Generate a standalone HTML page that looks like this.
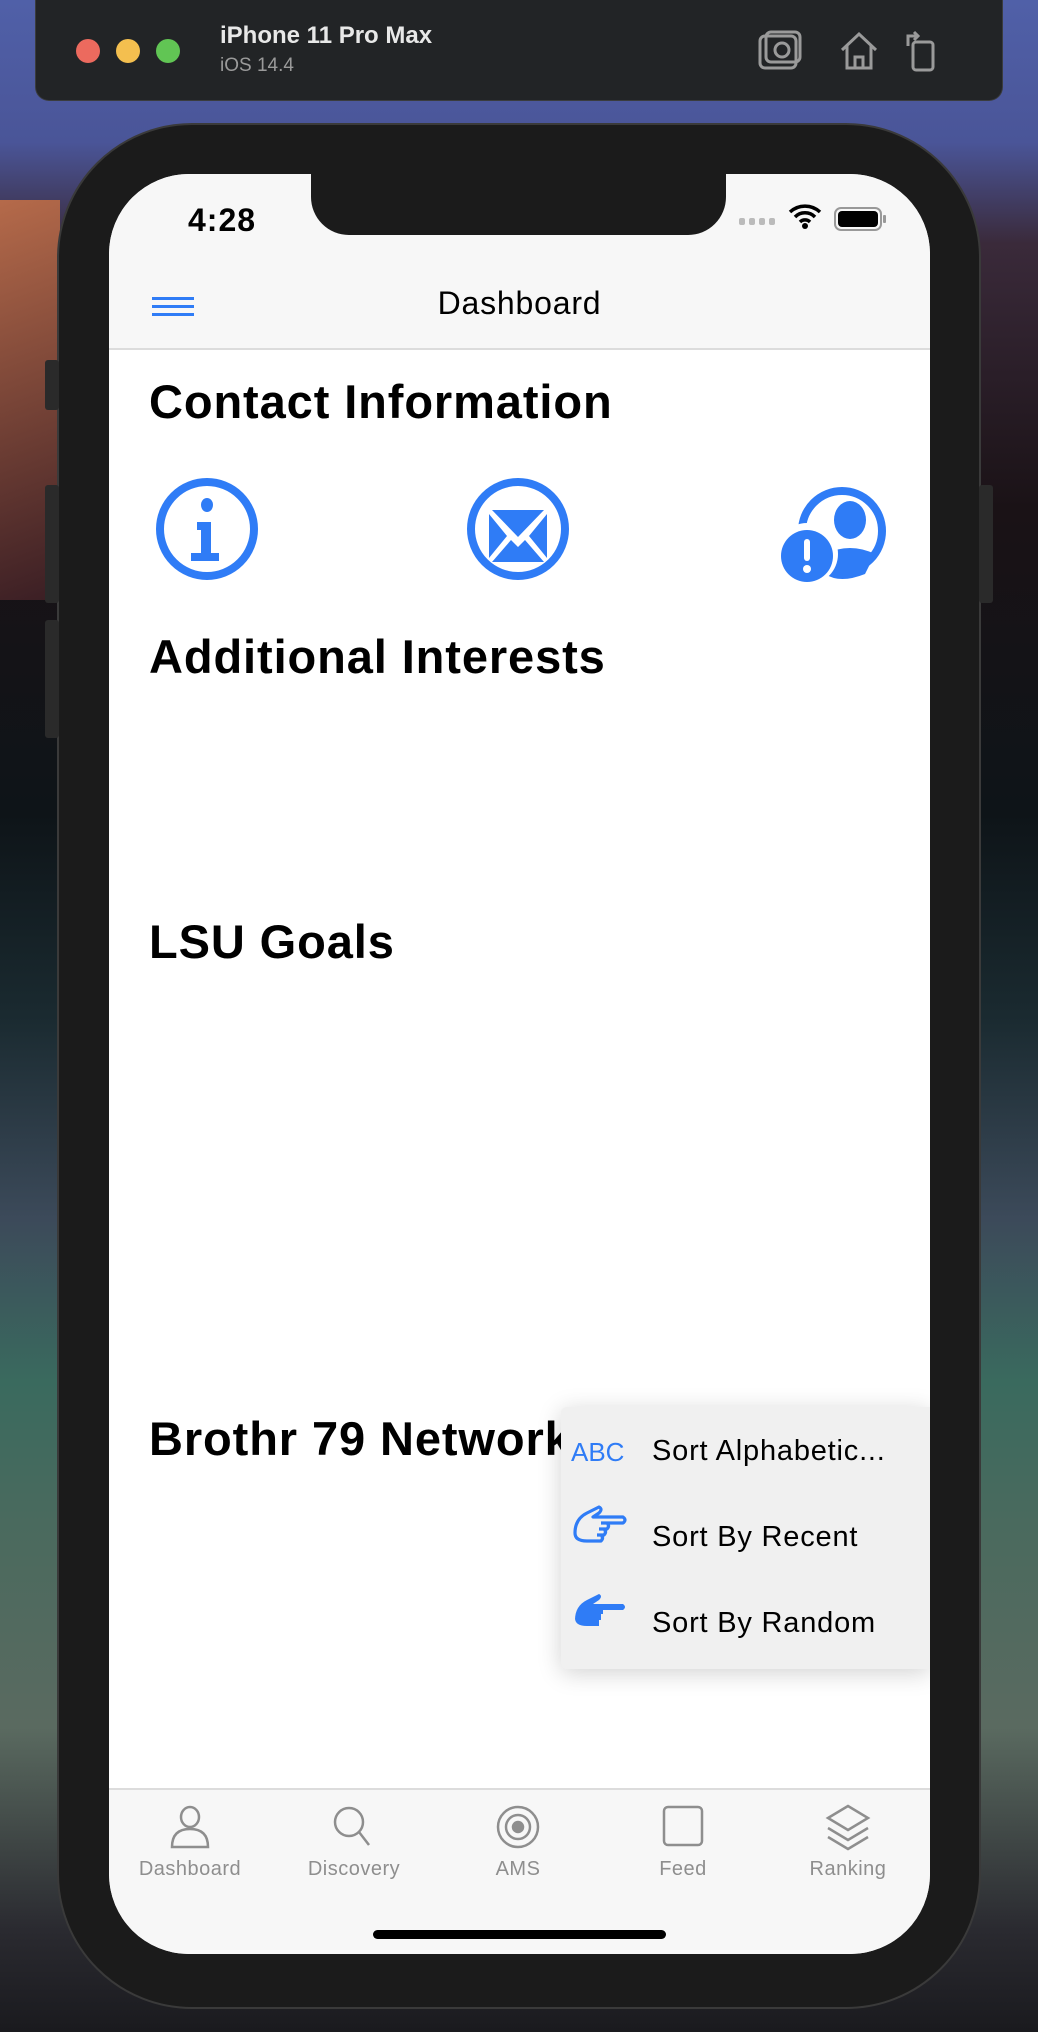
<!DOCTYPE html>
<html><head><meta charset="utf-8"><style>
*{margin:0;padding:0;box-sizing:border-box}
body{width:1038px;height:2032px;overflow:hidden;position:relative;font-family:"Liberation Sans",sans-serif;
background:linear-gradient(180deg,#5060a8 0%,#4a5598 7%,#3a2a3a 12%,#1a1216 25%,#0e1418 40%,#1a2a30 50%,#3c4a5a 60%,#3a6a5e 68%,#4a6a5e 75%,#5a6a60 85%,#2a2a30 95%,#1a1a1e 100%)}
.bgL{position:absolute;left:0;top:200px;width:60px;height:400px;background:linear-gradient(160deg,#b56a4a,#3a1e24);}
.bar{position:absolute;left:35px;top:0;width:968px;height:101px;background:#222426;border-radius:0 0 14px 14px;border:1px solid #3a3c3e;border-top:none}
.dot{position:absolute;top:39px;width:24px;height:24px;border-radius:50%}
.phone{position:absolute;left:57px;top:123px;width:924px;height:1886px;background:#1b1b1b;border-radius:135px;border:2px solid #3a3a3a}
.btn{position:absolute;background:#2a2a2a;border-radius:3px}
.screen{position:absolute;left:109px;top:174px;width:821px;height:1780px;background:#fff;border-radius:80px;overflow:hidden}
.notch{position:absolute;left:202px;top:0;width:415px;height:61px;background:#1b1b1b;border-radius:0 0 38px 38px}
.nav{position:absolute;left:0;top:0;width:821px;height:176px;background:#f7f7f7;border-bottom:2px solid #dcdcdc}
h2{position:absolute;left:40px;font-size:47px;font-weight:bold;color:#000;white-space:nowrap;letter-spacing:0.9px}
.tab{position:absolute;left:0;top:1614px;width:821px;height:166px;background:#f7f7f7;border-top:2px solid #dcdcdc}
.tl{position:absolute;top:68px;width:160px;margin-left:-80px;text-align:center;font-size:20px;color:#8e8e8e;letter-spacing:0.5px}
.menu{position:absolute;left:452px;top:1233px;width:369px;height:262px;background:#f0f0f0;border-radius:6px 0 0 6px;box-shadow:0 4px 24px rgba(0,0,0,0.18)}
.mi{position:absolute;left:91px;font-size:29px;color:#000;white-space:nowrap;letter-spacing:0.8px}
</style></head><body>
<div class="bgL"></div>
<div class="bar">
<div class="dot" style="left:40px;background:#ec6a5e"></div>
<div class="dot" style="left:80px;background:#f4bf4f"></div>
<div class="dot" style="left:120px;background:#61c554"></div>
<div style="position:absolute;left:184px;top:22px;font-size:24px;font-weight:bold;color:#e8e8e8">iPhone 11 Pro Max</div>
<div style="position:absolute;left:184px;top:55px;font-size:19px;color:#9a9a9a">iOS 14.4</div>
<svg style="position:absolute;left:722px;top:28px" width="180" height="45" viewBox="0 0 180 45" fill="none" stroke="#9a9a9a" stroke-width="3">
<rect x="2" y="8" width="36" height="32" rx="5"/><rect x="8" y="4" width="34" height="30" rx="5"/><circle cx="24" cy="22" r="7"/>
<path d="M84 22 L101 6 L118 22 M89 18 V40 H113 V18 M97 40 V29 H105 V40"/>
<rect x="155" y="14" width="20" height="28" rx="3"/><path d="M150 18 V8 h10 M156 4 l4 4 -4 4"/>
</svg>
</div>
<div class="phone"></div>
<div class="btn" style="left:45px;top:360px;width:14px;height:50px"></div>
<div class="btn" style="left:45px;top:485px;width:14px;height:118px"></div>
<div class="btn" style="left:45px;top:620px;width:14px;height:118px"></div>
<div class="btn" style="left:979px;top:485px;width:14px;height:118px"></div>
<div class="screen">
<div class="nav">
<div style="position:absolute;left:79px;top:28px;font-size:32px;font-weight:bold;color:#000;letter-spacing:1px">4:28</div>
<svg style="position:absolute;left:630px;top:30px" width="160" height="30" viewBox="0 0 160 30">
<g fill="#bbb"><rect x="0" y="14" width="6" height="7" rx="2"/><rect x="10" y="14" width="6" height="7" rx="2"/><rect x="20" y="14" width="6" height="7" rx="2"/><rect x="30" y="14" width="6" height="7" rx="2"/></g>
<path d="M51 8 a22 22 0 0 1 30 0 M56 13 a14 14 0 0 1 20 0 M61 18 a7 7 0 0 1 10 0" stroke="#000" stroke-width="3.5" fill="none"/><circle cx="66" cy="22" r="3" fill="#000"/>
<rect x="96" y="4" width="46" height="22" rx="6" fill="none" stroke="#999" stroke-width="2"/><rect x="99" y="7" width="40" height="16" rx="4" fill="#000"/><rect x="144" y="11" width="3" height="8" rx="1" fill="#999"/>
</svg>
<div class="notch"></div>
<div style="position:absolute;left:43px;top:123px;width:42px;height:3px;background:#2f7cf6;box-shadow:0 8px 0 #2f7cf6,0 16px 0 #2f7cf6"></div>
<div style="position:absolute;left:0;width:821px;top:111px;text-align:center;font-size:32px;color:#000;letter-spacing:0.8px">Dashboard</div>
</div>
<h2 style="top:200px">Contact Information</h2>
<svg style="position:absolute;left:0;top:300px" width="821" height="120" viewBox="0 0 821 120">
<g fill="none" stroke="#2f7cf6" stroke-width="8"><circle cx="98" cy="55" r="47"/><circle cx="409" cy="55" r="47"/></g>
<g fill="#2f7cf6"><ellipse cx="98" cy="31" rx="6" ry="7"/><path d="M88 48 h14 v31 h8 v8 h-28 v-8 h10 v-23 h-4z"/>
<path d="M383 36 h52 l-26 27z M380 40 l18 22 -18 22z M438 40 l-18 22 18 22z M383 88 l19 -22 7 7 7 -7 19 22z"/>
<circle cx="733" cy="57" r="40" fill="none" stroke="#2f7cf6" stroke-width="8"/>
<ellipse cx="741" cy="46" rx="16" ry="19"/><path d="M716 80 q25 -12 50 0 l-10 20 q-25 10 -40 0z"/>
<circle cx="698" cy="80" r="31" fill="#fff"/><circle cx="698" cy="82" r="26"/></g>
<rect x="695" y="65" width="6" height="22" rx="3" fill="#fff"/><circle cx="698" cy="95" r="4" fill="#fff"/>
</svg>
<h2 style="top:455px">Additional Interests</h2>
<h2 style="top:740px">LSU Goals</h2>
<h2 style="top:1237px">Brothr 79 Network</h2>
<div class="menu">
<div style="position:absolute;left:10px;top:30px;font-size:26px;color:#2f7cf6">ABC</div>
<div class="mi" style="top:28px">Sort Alphabetic...</div>
<svg style="position:absolute;left:10px;top:98px" width="56" height="44" viewBox="0 0 56 44"><path d="M4 28 q0 -14 12 -20 l12 -6 q4 2 0 6 l-6 4 h30 q4 3 0 6 h-20 M30 18 h6 q3 3 0 6 h-6 M28 24 h5 q3 3 0 6 h-5 M26 30 h4 q3 3 0 6 h-14 q-12 0 -12 -8" fill="none" stroke="#2f7cf6" stroke-width="3.2" stroke-linejoin="round"/></svg>
<div class="mi" style="top:114px">Sort By Recent</div>
<svg style="position:absolute;left:10px;top:185px" width="56" height="44" viewBox="0 0 56 44"><path d="M4 28 q0 -14 12 -20 l12 -6 q4 2 0 6 l-6 4 h30 q4 3 0 6 h-20 v4 h-2 v6 h-2 v6 h-12 q-12 0 -12 -8z" fill="#2f7cf6"/></svg>
<div class="mi" style="top:200px">Sort By Random</div>
</div>
<div class="tab">
<svg style="position:absolute;left:0;top:14px" width="821" height="52" viewBox="0 0 821 52" fill="none" stroke="#8e8e8e" stroke-width="2.5">
<ellipse cx="81" cy="13" rx="9" ry="10"/><path d="M63 43 q0 -18 18 -18 q18 0 18 18z"/>
<circle cx="240" cy="18" r="14"/><path d="M250 28 l10 13"/>
<circle cx="409" cy="23" r="20"/><circle cx="409" cy="23" r="12"/><circle cx="409" cy="23" r="5" fill="#8e8e8e"/>
<rect x="555" y="3" width="38" height="38" rx="4"/>
<path d="M719 14 l20 -12 20 12 -20 12z M719 24 l20 12 20 -12 M719 33 l20 12 20 -12"/>
</svg>
<div class="tl" style="left:81px">Dashboard</div>
<div class="tl" style="left:245px">Discovery</div>
<div class="tl" style="left:409px">AMS</div>
<div class="tl" style="left:574px">Feed</div>
<div class="tl" style="left:739px">Ranking</div>
<div style="position:absolute;left:264px;top:140px;width:293px;height:9px;border-radius:5px;background:#000"></div>
</div>
</div>
</body></html>
